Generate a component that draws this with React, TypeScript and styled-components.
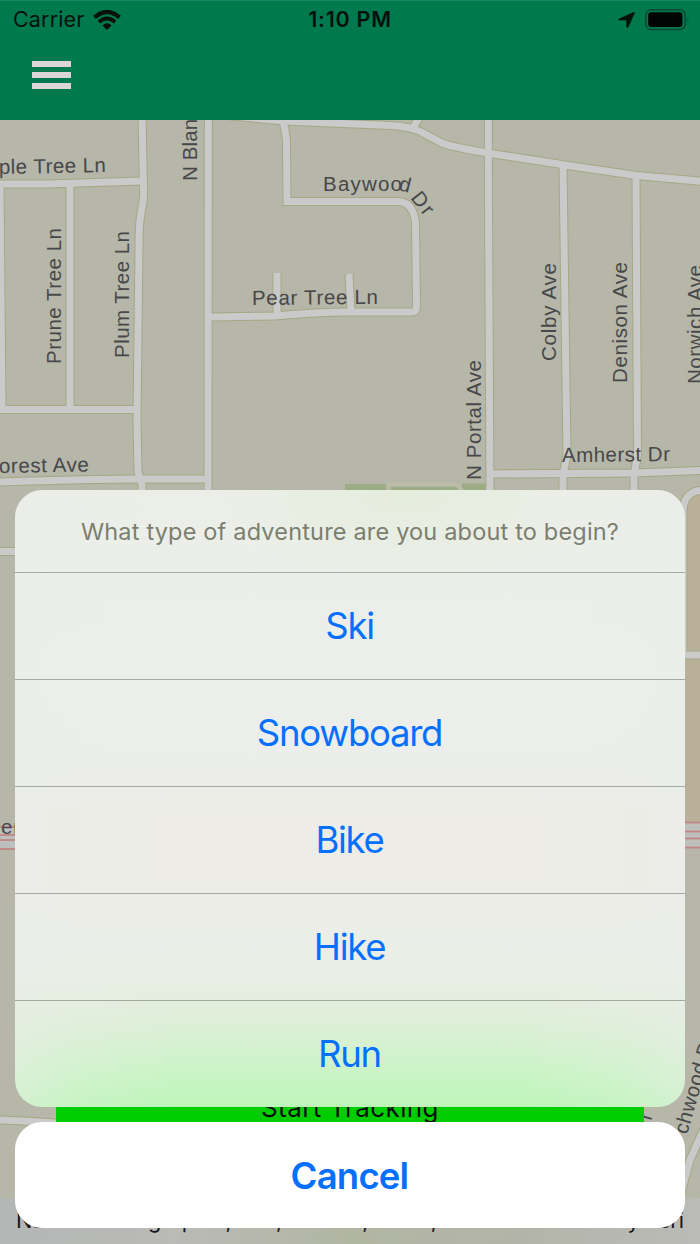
import styled, { createGlobalStyle, ThemeProvider } from "styled-components";

const theme = {
  colors: {
    header: "#00794f",
    land: "#b6b6a9",
    road: "#cacacb",
    casing: "#a5a882",
    label: "#47484a",
    action: "#0570fe",
    start: "#00cd00",
    divider: "rgba(60, 70, 60, 0.4)",
  },
};

const GlobalStyle = createGlobalStyle`
  * {
    box-sizing: border-box;
  }

  body {
    margin: 0;
    font-family: Inter, "Liberation Sans", sans-serif;
  }

  button {
    border: none;
    font-family: inherit;
    padding: 0;
    margin: 0;
  }
`;

const Screen = styled.div`
  position: relative;
  display: flex;
  flex-direction: column;
  width: 700px;
  height: 1244px;
  overflow: hidden;
`;

const Header = styled.header`
  flex: none;
  height: 120px;
  background: ${({ theme }) => theme.colors.header};
  border-top: 1px solid #1a8660;
`;

const StatusBar = styled.div`
  display: grid;
  grid-template-columns: 1fr auto 1fr;
  align-items: center;
  height: 37px;
  padding: 0 10px 0 13px;
  color: #06110c;
`;

const StatusGroup = styled.div<{ $end?: boolean }>`
  display: flex;
  align-items: center;
  justify-content: ${({ $end }) => ($end ? "flex-end" : "flex-start")};
  gap: ${({ $end }) => ($end ? "10px" : "8px")};
`;

const StatusText = styled.span<{ $bold?: boolean }>`
  font-size: 21.5px;
  line-height: 34px;
  padding-bottom: 2px;
  font-weight: ${({ $bold }) => ($bold ? 600 : 400)};
  letter-spacing: ${({ $bold }) => ($bold ? "0.75px" : "0.15px")};
  margin-right: ${({ $bold }) => ($bold ? "3px" : "0")};
`;

const MenuButton = styled.button`
  display: flex;
  flex-direction: column;
  gap: 5.3px;
  width: 39px;
  margin: 23px 0 0 32px;
  background: none;
`;

const MenuLine = styled.span`
  height: 5.8px;
  background: #dcd6d8;
`;

const MapView = styled.main`
  position: relative;
  flex: 1;
  background: ${({ theme }) => theme.colors.land};
`;

const MapDrawing = styled.svg`
  display: block;
`;

const MapLabel = styled.text`
  font-family: "Liberation Sans", Arial, sans-serif;
  font-size: 20.5px;
  fill: ${({ theme }) => theme.colors.label};
`;

const MapOverlay = styled.div`
  position: absolute;
  inset: auto 0 0 0;
  display: flex;
  flex-direction: column;
  align-items: center;
  gap: 64px;
`;

const StartButton = styled.button`
  width: 588px;
  height: 48px;
  padding-bottom: 4px;
  background: ${({ theme }) => theme.colors.start};
  color: #06110c;
  font-size: 26px;
  line-height: 42px;
  letter-spacing: 0.4px;
`;

const Attribution = styled.div`
  display: flex;
  justify-content: space-between;
  width: 100%;
  height: 46px;
  padding: 7px 16px;
  background: linear-gradient(90deg, #b3b7b6 0%, #babab6 25%, #b1b6a2 50%, #b3b4a9 75%, #bbbbb7 100%);
  color: #16181a;
  font-size: 21.7px;
  line-height: 30px;
  white-space: nowrap;
`;

const ActionSheet = styled.div`
  position: absolute;
  inset: auto 0 0 0;
  display: flex;
  flex-direction: column;
  gap: 15px;
  padding: 0 15px 16px;
`;

const Options = styled.div`
  border-radius: 27px;
  overflow: hidden;
  background:
    linear-gradient(90deg, rgba(234, 237, 232, 0.5) 0%, rgba(234, 237, 232, 0.23) 9%, rgba(234, 237, 232, 0) 24%, rgba(234, 237, 232, 0) 76%, rgba(234, 237, 232, 0.23) 91%, rgba(234, 237, 232, 0.5) 100%),
    linear-gradient(180deg, rgba(235, 238, 232, 0) 73%, #e9eee6 79%, #e2eedc 84%, #d8f0d3 89%, #c9f4c5 95%, #bdf5b9 100%),
    radial-gradient(ellipse 190px 90px at 58% 0, #e5eddd, rgba(230, 237, 223, 0)),
    linear-gradient(180deg, #ecefe8 0%, #ebeeea 42%, #edece7 53%, #edece7 63%, #ebeee8 74%);
`;

const SheetTitle = styled.h1`
  height: 82px;
  margin: 0;
  color: #7b7e70;
  font-size: 23.5px;
  font-weight: 400;
  letter-spacing: 0.18px;
  line-height: 83px;
  text-align: center;
`;

const Option = styled.button`
  display: block;
  width: 100%;
  height: 107px;
  padding: 1px 1px 0 0;
  border-top: 1px solid ${({ theme }) => theme.colors.divider};
  background: none;
  color: ${({ theme }) => theme.colors.action};
  font-size: 36.5px;
  letter-spacing: -1.25px;
  line-height: 105px;
`;

const Cancel = styled(Option)`
  height: 106px;
  padding-top: 2px;
  border: none;
  border-radius: 27px;
  background: #fff;
  font-weight: 600;
  line-height: 104px;
  letter-spacing: -0.8px;
`;

const roads = [
  "M0 184 L47 184 L142 181",
  "M0 184 L2 409",
  "M70 184 V409",
  "M0 409.5 H137",
  "M142 115 L143.5 190 Q144 200 141.5 210 Q139 222 139 245 L137 420 L138 472 L142 484 V500",
  "M0 482 Q90 479 140 479 H208",
  "M208.3 110 L208 500",
  "M210 317 L275 316 Q320 312 350 312 H412 Q416.5 312 416.5 307 L415.5 222 Q413 202 398 201.5 H287 L286.5 142 Q286 130 281 115",
  "M277 273 V315",
  "M349 274 L351 312",
  "M200 113 L284 121 L390 125.5 Q412 126 425 134 L440 142 Q446 146 488 153 L565 165 L636 175.5 L710 182",
  "M413 128 L421 114",
  "M488.3 110 V160 L490 500",
  "M563 165 L567 455 L563 475 V500",
  "M636 175 L637.5 455 L634 476 V500",
  "M490 474 L634 473 L710 470",
  "M0 551.5 H30",
  "M710 490 Q683 488 683 512 V655 H710",
  "M0 1120 Q30 1121 70 1124",
  "M710 1115 L690 1160 L675 1215",
];

const labels = [
  { text: "ple Tree Ln", x: -1, y: 174, length: 107, angle: -1 },
  { text: "orest Ave", x: -1, y: 473, length: 90, angle: -1 },
  { text: "Prune Tree Ln", x: 61, y: 364, length: 136, angle: -90 },
  { text: "Plum Tree Ln", x: 129, y: 358, length: 127, angle: -90 },
  { text: "N Blaney", x: 197, y: 181, length: 84, angle: -90 },
  { text: "Baywoo", x: 323, y: 191, length: 79, angle: 0 },
  { text: "d", x: 398, y: 190, length: 11.5, angle: 14 },
  { text: "Dr", x: 410, y: 198, length: 24, angle: 52 },
  { text: "Pear Tree Ln", x: 252, y: 305, length: 126, angle: -0.5 },
  { text: "N Portal Ave", x: 481, y: 480, length: 120, angle: -90 },
  { text: "Colby Ave", x: 556, y: 361, length: 98, angle: -90 },
  { text: "Denison Ave", x: 627, y: 383, length: 121, angle: -90 },
  { text: "Norwich Ave", x: 702, y: 384, length: 119, angle: -90 },
  { text: "Amherst Dr", x: 562, y: 462, length: 108, angle: -0.5 },
  { text: "er", x: 1, y: 834, length: 19, angle: 0 },
  { text: "r", x: 651, y: 1121, length: 8, angle: -75 },
  { text: "chwood Dr", x: 687, y: 1135, length: 102, angle: -74 },
];

const railLines = [
  "M0 827 H18",
  "M0 835 H18",
  "M0 840 H18",
  "M0 849 H18",
  "M683 822.5 H700",
  "M683 831.5 H700",
  "M683 838.5 H700",
  "M683 847.5 H700",
];

const options = ["Ski", "Snowboard", "Bike", "Hike", "Run"];

function StreetMap() {
  return (
    <MapDrawing width="700" height="1124" viewBox="0 120 700 1124">
      <path d="M684 492 H700 V822 H684 Z" fill="#b9b099" />
      <path d="M0 828 H18 V848 H0 Z M683 823 H700 V847 H683 Z" fill="#bcbfbb" />
      <path d="M345 484 H387 V500 H345 Z M391 486.5 H458 V500 H391 Z M462 483.5 H486 V500 H462 Z" fill="#9cad85" />
      <path d="M388 500 V484.5 H456 L463 491" fill="none" stroke="#bdbca6" strokeWidth="3.5" />
      <g fill="none" stroke={theme.colors.casing} strokeWidth="9">
        {roads.map((road) => (
          <path key={road} d={road} />
        ))}
      </g>
      <g fill="none" stroke={theme.colors.road} strokeWidth="7">
        {roads.map((road) => (
          <path key={road} d={road} />
        ))}
      </g>
      <g stroke="#c18584" strokeWidth="1.8">
        {railLines.map((line) => (
          <path key={line} d={line} />
        ))}
      </g>
      {labels.map(({ text, x, y, length, angle }) => (
        <MapLabel
          key={text}
          x={x}
          y={y}
          textLength={length}
          transform={`rotate(${angle} ${x} ${y})`}
        >
          {text}
        </MapLabel>
      ))}
    </MapDrawing>
  );
}

function WifiIcon() {
  return (
    <svg width="28" height="20" viewBox="0 0 28 20" fill="none" stroke="#06110c">
      <path d="M1.5 7.4 Q14 -3.6 26.5 7.4" strokeWidth="4.3" />
      <path d="M5.9 12.1 Q14 5 22.1 12.1" strokeWidth="3.8" />
      <path d="M9.4 15.4 Q14 11 18.6 15.4 L14 20 Z" fill="#06110c" stroke="none" />
    </svg>
  );
}

function LocationIcon() {
  return (
    <svg width="17" height="16" viewBox="0 0 17 16" fill="#06110c" stroke="#06110c" strokeWidth="0.7">
      <path d="M15.4 0.5 Q16.7 0.2 16.2 1.5 L10.1 14.9 Q9.3 16 8.7 14.8 V8.5 Q8.7 8 8.2 8 H1.2 Q-0.1 7.6 1.2 6.9 Z" />
    </svg>
  );
}

function BatteryIcon() {
  return (
    <svg width="45" height="22" viewBox="0 0 45 22">
      <rect x="0.8" y="0.8" width="39.4" height="19.8" rx="5.5" fill="none" stroke="#084b32" strokeWidth="1.5" />
      <rect x="3.2" y="3.2" width="34.2" height="14.8" rx="3.2" fill="#020403" />
      <path d="M42.3 7.3 Q44.5 10.7 42.3 14 Z" fill="#084b32" />
    </svg>
  );
}

function App() {
  return (
    <ThemeProvider theme={theme}>
      <GlobalStyle />
      <Screen>
        <Header>
          <StatusBar>
            <StatusGroup>
              <StatusText>Carrier</StatusText>
              <WifiIcon />
            </StatusGroup>
            <StatusText $bold>1:10 PM</StatusText>
            <StatusGroup $end>
              <LocationIcon />
              <BatteryIcon />
            </StatusGroup>
          </StatusBar>
          <MenuButton aria-label="Menu">
            <MenuLine />
            <MenuLine />
            <MenuLine />
          </MenuButton>
        </Header>
        <MapView>
          <StreetMap />
          <MapOverlay>
            <StartButton>Start Tracking</StartButton>
            <Attribution>
              <span>National Geographic, Esri, Garmin, HERE,</span>
              <span>Powered by Esri</span>
            </Attribution>
          </MapOverlay>
        </MapView>
        <ActionSheet>
          <Options>
            <SheetTitle>What type of adventure are you about to begin?</SheetTitle>
            {options.map((option) => (
              <Option key={option}>{option}</Option>
            ))}
          </Options>
          <Cancel>Cancel</Cancel>
        </ActionSheet>
      </Screen>
    </ThemeProvider>
  );
}

export default App;
